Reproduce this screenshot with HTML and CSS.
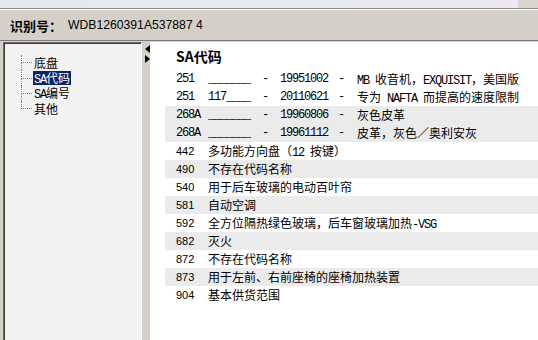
FILE: index.html
```html
<!DOCTYPE html>
<html lang="zh">
<head>
    <meta charset="UTF-8">
    <meta name="viewport" content="width=device-width, initial-scale=1.0">
    <title>SA代码</title>
    <link rel="stylesheet" href="styles.css">
</head>
<body>
    <div class="topstrip">
        <div class="topstrip-fill"></div>
        <div class="topstrip-end"></div>
    </div>

    <div class="idbar">
        <span class="id-label">识别号：</span>
        <span class="id-value">WDB1260391A537887 4</span>
    </div>

    <div class="main">
        <div class="tree-pane">
            <ul class="tree">
                <li><span class="branch"><i></i><i></i></span><span class="node">底盘</span></li>
                <li><span class="branch"><i></i><i></i></span><span class="node selected"><span class="lat">SA</span>代码</span></li>
                <li><span class="branch"><i></i><i></i></span><span class="node"><span class="lat">SA</span>编号</span></li>
                <li class="last"><span class="branch"><i></i><i></i></span><span class="node">其他</span></li>
            </ul>
        </div>

        <div class="splitter">
            <span class="arrow-left"></span>
            <span class="arrow-right"></span>
        </div>

        <div class="content">
            <div class="content-title">SA代码</div>
            <div class="sa-list">
                <div class="sa-row detail">
                    <span class="mono">251</span><span class="mono">_______</span><span class="mono">-</span><span class="mono">19951002</span><span class="mono">-</span>
                    <span class="sa-text"><span class="lat">MB </span>收音机，<span class="lat">EXQUISIT</span>，美国版</span>
                </div>
                <div class="sa-row detail">
                    <span class="mono">251</span><span class="mono">117____</span><span class="mono">-</span><span class="mono">20110621</span><span class="mono">-</span>
                    <span class="sa-text">专为<span class="lat"> NAFTA </span>而提高的速度限制</span>
                </div>
                <div class="sa-row detail shade">
                    <span class="mono">268A</span><span class="mono">_______</span><span class="mono">-</span><span class="mono">19960806</span><span class="mono">-</span>
                    <span class="sa-text">灰色皮革</span>
                </div>
                <div class="sa-row detail shade">
                    <span class="mono">268A</span><span class="mono">_______</span><span class="mono">-</span><span class="mono">19961112</span><span class="mono">-</span>
                    <span class="sa-text">皮革，灰色／奥利安灰</span>
                </div>
                <div class="sa-row">
                    <span class="code">442</span><span class="sa-text wide">多功能方向盘（<span class="lat">12 </span>按键）</span>
                </div>
                <div class="sa-row shade">
                    <span class="code">490</span><span class="sa-text wide">不存在代码名称</span>
                </div>
                <div class="sa-row">
                    <span class="code">540</span><span class="sa-text wide">用于后车玻璃的电动百叶帘</span>
                </div>
                <div class="sa-row shade">
                    <span class="code">581</span><span class="sa-text wide">自动空调</span>
                </div>
                <div class="sa-row">
                    <span class="code">592</span><span class="sa-text wide">全方位隔热绿色玻璃，后车窗玻璃加热<span class="lat">-VSG</span></span>
                </div>
                <div class="sa-row shade">
                    <span class="code">682</span><span class="sa-text wide">灭火</span>
                </div>
                <div class="sa-row">
                    <span class="code">872</span><span class="sa-text wide">不存在代码名称</span>
                </div>
                <div class="sa-row shade">
                    <span class="code">873</span><span class="sa-text wide">用于左前、右前座椅的座椅加热装置</span>
                </div>
                <div class="sa-row">
                    <span class="code">904</span><span class="sa-text wide">基本供货范围</span>
                </div>
            </div>
        </div>
    </div>
</body>
</html>
```

FILE: styles.css
```css
:root {
    --face-color: #d4d0c8;
    --shadow-color: #808080;
    --select-color: #0a246a;
    --shade-color: #ebebeb;
    --text-color: #000;
    --cjk-font: "Noto Sans CJK SC", sans-serif;
    --mono-font: "Liberation Mono", "Noto Sans CJK SC", monospace;
}

* {
    box-sizing: border-box;
}

body {
    margin: 0;
    width: 538px;
    height: 340px;
    overflow: hidden;
    background-color: var(--face-color);
    color: var(--text-color);
    font-family: var(--cjk-font);
    font-size: 12px;
}

/* 顶部窗口边 */
.topstrip {
    display: flex;
    height: 9px;
    border-bottom: 1px solid #8a8a8a;
}

.topstrip-fill {
    flex: 1;
    background: linear-gradient(90deg, #e6e8f1, #eceaf0);
}

.topstrip-end {
    width: 20px;
    background-color: #d9d5cd;
}

/* 识别号栏 */
.idbar {
    display: flex;
    align-items: center;
    height: 32px;
    padding-left: 10px;
    border-top: 1px solid #fff;
    border-bottom: 1px solid #7c7c7c;
}

.id-label {
    width: 58px;
    font-size: 13px;
    font-weight: bold;
}

.id-value {
    font-family: "Liberation Sans", Arial, sans-serif;
    font-size: 12.2px;
}

.main {
    display: flex;
    height: 299px;
    padding-top: 1px;
}

/* 左侧目录树 */
.tree-pane {
    width: 139px;
    margin-left: 3px;
    background-color: #f2f2f2;
    border-top: 1px solid #6a6a6a;
    border-left: 1px solid #6a6a6a;
    border-right: 1px solid #fff;
    box-shadow: inset 1px 1px 0 #404040;
}

.tree {
    list-style: none;
    margin: 0;
    padding: 12px 0 0 17px;
}

.tree li {
    display: flex;
    align-items: center;
    height: 15.4px;
}

.branch {
    display: flex;
    flex-direction: column;
    align-self: stretch;
    width: 11px;
    margin-right: 1px;
}

.branch i {
    flex: 1;
    border-left: 1px dotted var(--shadow-color);
}

.branch i:first-child {
    border-bottom: 1px dotted var(--shadow-color);
}

.tree li.last .branch i:last-child {
    border-left: none;
}

.node {
    height: 14px;
    line-height: 14px;
    padding: 0 1px;
    white-space: nowrap;
}

.node .lat {
    line-height: 14px;
}

.node.selected {
    background-color: var(--select-color);
    color: #fff;
}

/* 分隔条 */
.splitter {
    display: flex;
    flex-direction: column;
    align-items: flex-end;
    gap: 2px;
    width: 8px;
    padding-top: 3px;
}

.arrow-left {
    width: 0;
    height: 0;
    border-top: 4px solid transparent;
    border-bottom: 4px solid transparent;
    border-right: 5px solid #000;
}

.arrow-right {
    width: 0;
    height: 0;
    border-top: 4px solid transparent;
    border-bottom: 4px solid transparent;
    border-left: 5px solid #000;
}

/* 右侧内容 */
.content {
    flex: 1;
    background-color: #fff;
    padding-left: 15px;
}

.content-title {
    height: 28px;
    line-height: 28px;
    padding-left: 11px;
    font-size: 14px;
    font-weight: bold;
}

.sa-row {
    display: grid;
    grid-template-columns: 32px 54px 18px 58px 19px 1fr;
    height: 18px;
    line-height: 18px;
    padding-left: 11px;
    white-space: nowrap;
}

.sa-row.shade {
    background-color: var(--shade-color);
}

.mono,
.lat {
    font-family: var(--mono-font);
    font-size: 12px;
    letter-spacing: -1.2px;
    white-space: pre;
}

.code {
    font-family: "Liberation Sans", Arial, sans-serif;
    font-size: 11px;
}

.sa-text.wide {
    grid-column: 2 / -1;
}
```
